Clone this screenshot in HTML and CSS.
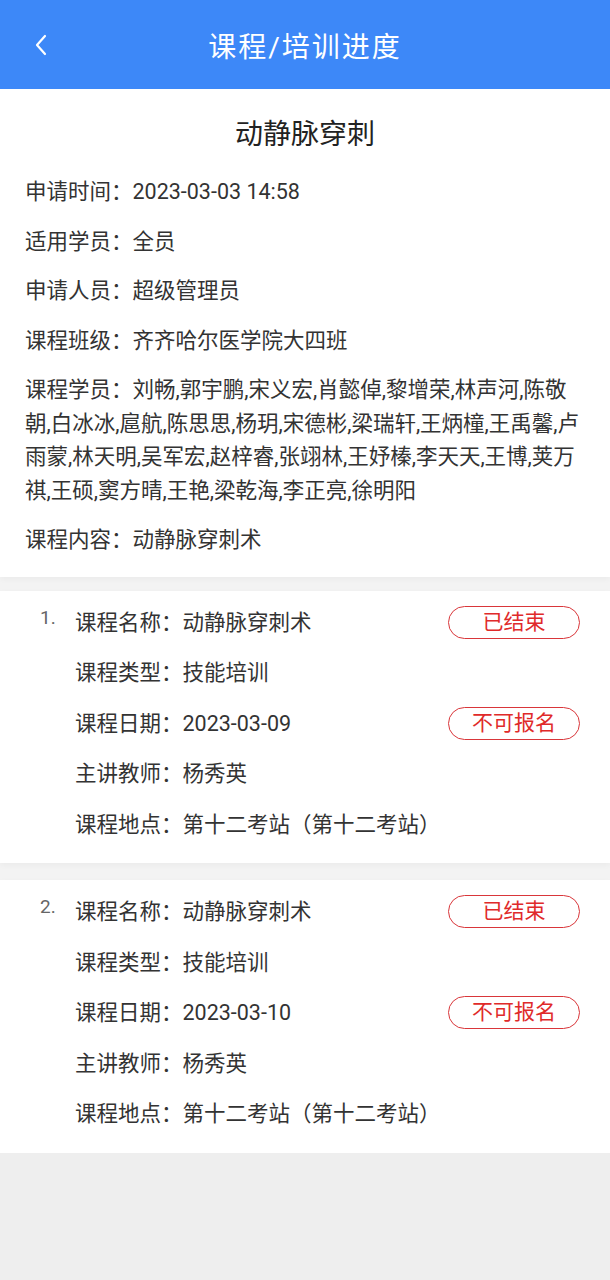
FILE: index.html
```html
<!DOCTYPE html>
<html lang="zh-CN">
<head>
    <meta charset="UTF-8">
    <meta name="viewport" content="width=device-width, initial-scale=1.0">
    <title>课程/培训进度</title>
    <link rel="stylesheet" href="styles.css">
</head>
<body>

    <!-- Top bar -->
    <div class="header">
        <a class="back" href="#">
            <svg width="14" height="22" viewBox="0 0 14 22">
                <polyline points="11,2 3,11 11,20" fill="none" stroke="#fff" stroke-width="2.2" stroke-linecap="round" stroke-linejoin="round"/>
            </svg>
        </a>
        <h1>课程/培训进度</h1>
    </div>

    <div class="content">
        <!-- Application info -->
        <div class="card info">
            <h2 class="info-title">动静脉穿刺</h2>
            <div class="row">申请时间：2023-03-03 14:58</div>
            <div class="row">适用学员：全员</div>
            <div class="row">申请人员：超级管理员</div>
            <div class="row">课程班级：齐齐哈尔医学院大四班</div>
            <div class="row">课程学员：刘畅,郭宇鹏,宋义宏,肖懿倬,黎增荣,林声河,陈敬朝,白冰冰,扈航,陈思思,杨玥,宋德彬,梁瑞轩,王炳橦,王禹馨,卢雨蒙,林天明,吴军宏,赵梓睿,张翊林,王妤榛,李天天,王博,荚万祺,王硕,窦方晴,王艳,梁乾海,李正亮,徐明阳</div>
            <div class="row">课程内容：动静脉穿刺术</div>
        </div>

        <!-- Course list -->
        <div class="card course">
            <span class="num">1.</span>
            <div class="course-rows">
                <div class="row">
                    <span>课程名称：动静脉穿刺术</span>
                    <span class="badge">已结束</span>
                </div>
                <div class="row"><span>课程类型：技能培训</span></div>
                <div class="row">
                    <span>课程日期：2023-03-09</span>
                    <span class="badge">不可报名</span>
                </div>
                <div class="row"><span>主讲教师：杨秀英</span></div>
                <div class="row"><span>课程地点：第十二考站（第十二考站）</span></div>
            </div>
        </div>

        <div class="card course">
            <span class="num">2.</span>
            <div class="course-rows">
                <div class="row">
                    <span>课程名称：动静脉穿刺术</span>
                    <span class="badge">已结束</span>
                </div>
                <div class="row"><span>课程类型：技能培训</span></div>
                <div class="row">
                    <span>课程日期：2023-03-10</span>
                    <span class="badge">不可报名</span>
                </div>
                <div class="row"><span>主讲教师：杨秀英</span></div>
                <div class="row"><span>课程地点：第十二考站（第十二考站）</span></div>
            </div>
        </div>
    </div>

</body>
</html>
```

FILE: styles.css
```css
body {
    margin: 0;
    background-color: #eeeeee;
    font-family: Roboto, "Noto Sans CJK SC", sans-serif;
    color: #333;
}

/* Header */
.header {
    height: 89px;
    background-color: #3d88f8;
    display: flex;
    align-items: center;
    justify-content: center;
    position: relative;
}

.header h1 {
    margin: 0;
    font-size: 28px;
    font-weight: normal;
    color: #fff;
    letter-spacing: 2px;
}

.back {
    position: absolute;
    left: 34px;
    top: 34px;
    display: flex;
}

/* Cards */
.content {
    display: flex;
    flex-direction: column;
    gap: 14px;
    background-color: #f3f3f3;
}

.card {
    background-color: #fff;
    box-shadow: 0 2px 6px rgba(0, 0, 0, 0.04);
}

.info {
    padding: 26px 25px 20px 25px;
    display: flex;
    flex-direction: column;
    gap: 16px;
}

.info-title {
    margin: 0 0 4px 0;
    text-align: center;
    font-size: 28px;
    font-weight: normal;
    line-height: 40px;
    color: #222;
}

.row {
    font-size: 21.5px;
    line-height: 33.5px;
}

/* Course items */
.course {
    display: flex;
    padding: 15px 30px 22px 40px;
}

.course + .course {
    margin-top: 3px;
}

.num {
    width: 35px;
    flex-shrink: 0;
    font-size: 19px;
    line-height: 24px;
    color: #666;
}

.course-rows {
    flex: 1;
    display: flex;
    flex-direction: column;
    gap: 17px;
}

.course-rows .row {
    display: flex;
    justify-content: space-between;
    align-items: center;
}

.badge {
    width: 130px;
    height: 31px;
    border: 1.5px solid #d9363a;
    border-radius: 17px;
    color: #e02a2a;
    font-size: 21px;
    line-height: 31px;
    text-align: center;
}
```
